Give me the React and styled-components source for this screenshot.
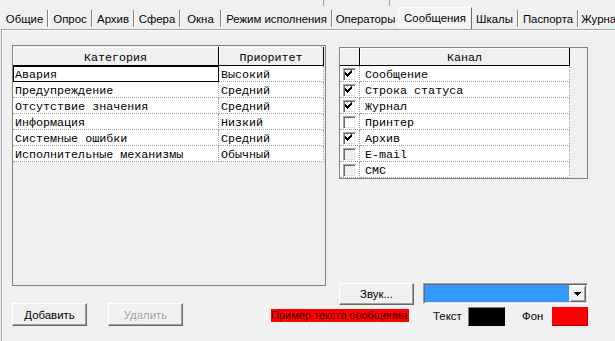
import React from 'react';
import styled, { createGlobalStyle, css } from 'styled-components';

const Global = createGlobalStyle`
  html, body { margin: 0; padding: 0; background: #f0f0f0; }
  body { font-family: "Liberation Sans", Arial, sans-serif; font-size: 11px; color: #000; }
`;

const Screen = styled.div`
  width: 615px;
  height: 341px;
  overflow: hidden;
  background: #f0f0f0;
  display: flex;
  flex-direction: column;
`;

const TopStrip = styled.div`
  height: 7px;
  display: flex;
  flex: none;
`;

const StripCell = styled.div`
  width: ${p => p.$w}px;
  height: 6px;
  flex: none;
  border-right: 1px solid #a0a0a0;
`;

const TabBar = styled.div`
  height: 22px;
  flex: none;
  display: flex;
  align-items: stretch;
  padding-left: 2px;
  white-space: nowrap;
  overflow: hidden;
`;

const Tab = styled.div`
  box-sizing: border-box;
  width: ${p => p.$w}px;
  flex: none;
  display: flex;
  justify-content: center;
  align-items: flex-start;
  padding-top: 5px;
  line-height: 14px;
  font-size: 11.4px;
  ${p => p.$active && css`
    padding-top: 3px;
    background: #f4f4f4;
    border-top: 1px solid #fff;
    border-left: 1px solid #fff;
    border-right: 1px solid #696969;
  `}
`;

const TabSep = styled.div`
  width: 0;
  height: 17px;
  flex: none;
  margin-top: 3px;
  border-left: 1px solid #808080;
  border-right: 1px solid #fff;
`;

const Page = styled.div`
  flex: 1;
  margin-left: 1px;
  border-left: 1px solid #a0a0a0;
  border-top: 1px solid #a0a0a0;
  box-shadow: inset 1px 1px 0 #fff;
  padding: 15px 0 0 10px;
`;

const Body = styled.div`
  display: grid;
  grid-template-columns: 314px 249px;
  column-gap: 13px;
  grid-template-rows: 238px 3px 17px 23px;
`;

const GridFrame = styled.div`
  box-sizing: border-box;
  height: ${p => p.$h}px;
  border: 1px solid #828282;
  background: #f0f0f0;
  padding-top: ${p => p.$pt || 0}px;
  margin-top: ${p => p.$mt || 0}px;
  overflow: hidden;
  font-family: "Liberation Mono", "Courier New", monospace;
  font-size: 11.7px;
  grid-column: ${p => p.$col};
  grid-row: ${p => p.$row};
  align-self: start;
`;

const GridRow = styled.div`
  display: flex;
  height: ${p => p.$h}px;
`;

const HeadCell = styled.div`
  box-sizing: border-box;
  width: ${p => p.$w}px;
  flex: none;
  height: 100%;
  background: #f0f0f0;
  border-right: 1px solid #000;
  border-bottom: 1px solid #000;
  box-shadow: inset 1px 1px 0 #fff;
  display: flex;
  align-items: center;
  justify-content: center;
  padding-top: 3px;
`;

const Cell = styled.div`
  box-sizing: border-box;
  width: ${p => p.$w}px;
  flex: none;
  height: 16px;
  background: #fff;
  border-right: 1px dotted #a0a0a0;
  border-bottom: 1px dotted #a0a0a0;
  padding: 3px 0 0 ${p => (p.$pl ?? 2)}px;
  line-height: 12px;
  white-space: nowrap;
  overflow: hidden;
  ${p => p.$focus && css`
    outline: 1px solid #000;
    outline-offset: -1px;
    box-shadow: inset 1px 0 0 #000;
  `}
`;

const CheckCell = styled(Cell)`
  padding: 2px 0 0 3px;
`;

const CheckBox = styled.span`
  box-sizing: border-box;
  display: block;
  width: 13px;
  height: 13px;
  border-style: solid;
  border-width: 1px;
  border-color: #a0a0a0 #fff #fff #a0a0a0;
  box-shadow: inset 1px 1px 0 #696969, inset -1px -1px 0 #e3e3e3;
  background: ${p => (p.$disabled ? '#f0f0f0' : '#fff')};
  svg { display: block; }
`;

const CHECK_PATH = [
  [1, 3], [2, 4], [3, 5], [4, 4], [5, 3], [6, 2], [7, 1],
].map(([x, y]) => `M${x} ${y}h1v3h-1z`).join(' ');

function Check({ checked, disabled }) {
  return (
    <CheckBox $disabled={disabled}>
      {checked && (
        <svg width="11" height="11" viewBox="0 0 11 11">
          <path d={CHECK_PATH} fill="#000" />
        </svg>
      )}
    </CheckBox>
  );
}

const SoundRow = styled.div`
  grid-column: 2;
  grid-row: 2 / 4;
  align-self: start;
  display: flex;
  height: 22px;
`;

const Button = styled.button`
  box-sizing: border-box;
  width: 75px;
  height: ${p => p.$h || 23}px;
  margin: 0 0 0 ${p => p.$ml || 0}px;
  padding: 0;
  flex: none;
  font: 11.4px "Liberation Sans", Arial, sans-serif;
  color: #000;
  background: #f0f0f0;
  border: 1px solid;
  border-color: #fff #696969 #696969 #fff;
  box-shadow: inset -1px -1px 0 #a0a0a0;
  border-radius: 0;
  &:disabled {
    color: #a0a0a0;
    text-shadow: 1px 1px 0 #fff;
  }
`;

const Combo = styled.div`
  box-sizing: border-box;
  width: 165px;
  height: 21px;
  margin-left: 9px;
  display: flex;
  border: 1px solid;
  border-color: #a0a0a0 #fff #fff #a0a0a0;
  box-shadow: inset 1px 1px 0 #696969, inset -1px -1px 0 #e3e3e3;
  padding: 1px;
  background: #fff;
`;

const ComboValue = styled.div`
  flex: 1;
  background: #3399ff;
`;

const ComboButton = styled.div`
  box-sizing: border-box;
  width: 17px;
  flex: none;
  background: #f0f0f0;
  border: 1px solid;
  border-color: #f0f0f0 #696969 #696969 #f0f0f0;
  box-shadow: inset 1px 1px 0 #fff, inset -1px -1px 0 #a0a0a0;
  display: flex;
  align-items: center;
  justify-content: center;
  svg { display: block; }
`;

const BottomRow = styled.div`
  grid-column: 1 / 3;
  grid-row: 4;
  display: flex;
  align-items: flex-start;
`;

const Sample = styled.div`
  width: 138px;
  height: 13px;
  flex: none;
  margin: 6px 0 0 88px;
  background: #ff0000;
  color: #3a0000;
  font-size: 11px;
  line-height: 13px;
  white-space: nowrap;
  overflow: hidden;
`;

const ColorGroup = styled.div`
  margin-left: auto;
  display: flex;
  align-items: flex-start;
`;

const Label = styled.span`
  box-sizing: border-box;
  width: ${p => p.$w}px;
  flex: none;
  margin: 6px 0 0 ${p => p.$ml || 0}px;
  line-height: 14px;
  font-size: 11.4px;
  white-space: nowrap;
`;

const Swatch = styled.div`
  box-sizing: border-box;
  width: ${p => p.$w}px;
  height: 19px;
  flex: none;
  margin-top: 4px;
  background: ${p => p.$color};
  border: 1px solid;
  border-color: ${p => p.$tl} ${p => p.$br} ${p => p.$br} ${p => p.$tl};
`;

const TABS = [
  { t: 'Общие', w: 45 },
  { t: 'Опрос', w: 42 },
  { t: 'Архив', w: 40 },
  { t: 'Сфера', w: 44 },
  { t: 'Окна', w: 39 },
  { t: 'Режим исполнения', w: 109 },
  { t: 'Операторы', w: 65, noSep: true },
  { t: 'Сообщения', w: 74, active: true, noSep: true },
  { t: 'Шкалы', w: 45 },
  { t: 'Паспорта', w: 58 },
  { t: 'Журнал', w: 46 },
];

const CATEGORIES = [
  ['Авария', 'Высокий'],
  ['Предупреждение', 'Средний'],
  ['Отсутствие значения', 'Средний'],
  ['Информация', 'Низкий'],
  ['Системные ошибки', 'Средний'],
  ['Исполнительные механизмы', 'Обычный'],
];

const CHANNELS = [
  { t: 'Сообщение', c: true },
  { t: 'Строка статуса', c: true },
  { t: 'Журнал', c: true },
  { t: 'Принтер', c: false },
  { t: 'Архив', c: true },
  { t: 'E-mail', c: false, d: true },
  { t: 'СМС', c: false, d: true },
];

export default function App() {
  return (
    <>
      <Global />
      <Screen>
        <TopStrip>
          <StripCell $w={323} />
          <StripCell $w={65} />
        </TopStrip>
        <TabBar>
          {TABS.map((tab, i) => (
            <React.Fragment key={tab.t}>
              <Tab $w={tab.w} $active={tab.active}>{tab.t}</Tab>
              {!tab.noSep && i < TABS.length - 1 && <TabSep />}
            </React.Fragment>
          ))}
        </TabBar>
        <Page>
          <Body>
            <GridFrame $h={241} $pt={1} $col={1} $row="1 / 3">
              <GridRow $h={19}>
                <HeadCell $w={206}>Категория</HeadCell>
                <HeadCell $w={105}>Приоритет</HeadCell>
              </GridRow>
              {CATEGORIES.map(([name, prio], i) => (
                <GridRow $h={16} key={name}>
                  <Cell $w={206} $focus={i === 0}>{name}</Cell>
                  <Cell $w={105}>{prio}</Cell>
                </GridRow>
              ))}
            </GridFrame>

            <GridFrame $h={132} $mt={2} $col={2} $row={1}>
              <GridRow $h={18}>
                <HeadCell $w={20} />
                <HeadCell $w={210}>Канал</HeadCell>
              </GridRow>
              {CHANNELS.map(ch => (
                <GridRow $h={16} key={ch.t}>
                  <CheckCell $w={20}>
                    <Check checked={ch.c} disabled={ch.d} />
                  </CheckCell>
                  <Cell $w={210} $pl={5}>{ch.t}</Cell>
                </GridRow>
              ))}
            </GridFrame>

            <SoundRow>
              <Button $h={22}>Звук...</Button>
              <Combo>
                <ComboValue />
                <ComboButton>
                  <svg width="7" height="4" viewBox="0 0 7 4">
                    <path d="M0 0h7v1h-7z M1 1h5v1h-5z M2 2h3v1h-3z M3 3h1v1h-1z" fill="#000" />
                  </svg>
                </ComboButton>
              </Combo>
            </SoundRow>

            <BottomRow>
              <Button>Добавить</Button>
              <Button $ml={21} disabled>Удалить</Button>
              <Sample>Пример текста сообщения</Sample>
              <ColorGroup>
                <Label $w={35}>Текст</Label>
                <Swatch $w={37} $color="#000" $tl="#808080" $br="#000" />
                <Label $w={30} $ml={17}>Фон</Label>
                <Swatch $w={36} $color="#ff0000" $tl="#ff0000" $br="#c00000" />
              </ColorGroup>
            </BottomRow>
          </Body>
        </Page>
      </Screen>
    </>
  );
}
